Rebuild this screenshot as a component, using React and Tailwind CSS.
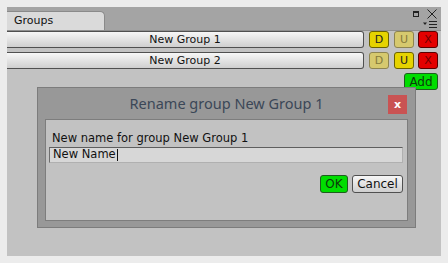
const FONT = { fontFamily: '"DejaVu Sans", Verdana, sans-serif' };

const BTN = {
  gray: 'bg-gradient-to-b from-[#f7f7f7] to-[#cfcfcf] border-[#505050] text-[#111]',
  yellow: 'bg-[#e6d300] border-[#6b6200] text-[#222]',
  yellowOff: 'bg-[#d6c96e] border-[#8d8450] text-[#857b3c]',
  red: 'bg-[#e40000] border-[#5a0000] text-[#6e0000]',
  green: 'bg-[#00dd00] border-[#1f5d1f] text-[#0c3a0c]',
};

function Btn({ kind, className = '', children }) {
  return (
    <div
      className={`flex items-center justify-center rounded-[3px] border text-[11px] leading-none ${BTN[kind]} ${className}`}
    >
      {children}
    </div>
  );
}

function GroupRow({ name, dOn, uOn }) {
  return (
    <div className="flex h-[17px] items-stretch pr-[3px]">
      <Btn kind="gray" className="flex-1 rounded-l-none border-l-0">{name}</Btn>
      <Btn kind={dOn ? 'yellow' : 'yellowOff'} className="ml-[5px] w-[20px]">D</Btn>
      <Btn kind={uOn ? 'yellow' : 'yellowOff'} className="ml-[5px] w-[20px]">U</Btn>
      <Btn kind="red" className="ml-[4px] w-[20px]">X</Btn>
    </div>
  );
}

export default function App() {
  return (
    <div className="h-[263px] w-[448px] bg-[#ececec] p-[7px]" style={FONT}>
      <div className="relative flex h-full flex-col bg-[#c2c2c2]">
        {/* title bar with tab */}
        <div className="relative flex h-[24px] items-end border-b border-[#8f8f8f] bg-[#a4a4a4]">
          <div className="flex h-[19px] w-[98px] items-center rounded-tr-[5px] border-r border-t border-[#8a8a8a] bg-[#dadada] pl-[7px] text-[11px] text-[#111]">
            Groups
          </div>
          <svg className="absolute left-[406px] top-[4px]" width="6" height="6" viewBox="0 0 6 6">
            <rect x="0.5" y="0.5" width="5" height="5" fill="none" stroke="#222" />
            <rect x="0" y="0" width="6" height="2" fill="#222" />
          </svg>
          <svg className="absolute left-[420px] top-[2px]" width="10" height="10" viewBox="0 0 10 10">
            <path d="M0.5 0.5 L9.5 9.5 M9.5 0.5 L0.5 9.5" stroke="#222" strokeWidth="1" />
          </svg>
          <svg className="absolute left-[416px] top-[14px]" width="14" height="7" viewBox="0 0 14 7">
            <path d="M0 1.5 L4 1.5 L2 4 Z" fill="#222" />
            <path d="M6 0.5 H14 M6 3.5 H14 M6 6.5 H14" stroke="#222" strokeWidth="1" />
          </svg>
        </div>

        {/* group rows */}
        <div className="flex flex-col gap-[4px]">
          <GroupRow name="New Group 1" dOn uOn={false} />
          <GroupRow name="New Group 2" dOn={false} uOn />
          <div className="flex justify-end pr-[3px]">
            <Btn kind="green" className="h-[17px] w-[34px] text-[12px]">Add</Btn>
          </div>
        </div>

        {/* rename dialog */}
        <div className="absolute left-[30px] top-[80px] flex h-[141px] w-[379px] flex-col border border-[#7c7c7c] bg-[#989898] px-[7px] pb-[6px]">
          <div className="relative flex h-[31px] items-center justify-center">
            <span
              className="text-[14.5px] text-[#3b4757]"
              style={{ fontFamily: '"Noto Sans", "Open Sans", sans-serif' }}
            >
              Rename group New Group 1
            </span>
            <div className="absolute right-[1px] top-[7px] flex h-[19px] w-[19px] items-center justify-center bg-[#c95353] text-[11px] font-bold leading-none text-white">
              x
            </div>
          </div>
          <div className="flex flex-1 flex-col border border-[#7d7d7d] bg-[#c2c2c2] pl-[3px] pr-[4px]">
            <div className="mt-[11px] h-[15px] pl-[3px] text-[11.5px] leading-[15px] text-[#111]">
              New name for group New Group 1
            </div>
            <div className="mt-[1px] flex h-[16px] items-center border border-b-[#b0b0b0] border-l-[#6e6e6e] border-r-[#b0b0b0] border-t-[#5e5e5e] bg-[#d7d7d7] px-[3px] text-[11.5px] leading-none text-[#111]">
              New Name
              <span className="ml-[1px] h-[12px] w-px bg-[#111]" />
            </div>
            <div className="mt-[12px] flex justify-end gap-[4px]">
              <Btn kind="green" className="h-[18px] w-[28px] text-[12px]">OK</Btn>
              <Btn kind="gray" className="h-[18px] w-[51px] text-[12px]">Cancel</Btn>
            </div>
          </div>
        </div>
      </div>
    </div>
  );
}
